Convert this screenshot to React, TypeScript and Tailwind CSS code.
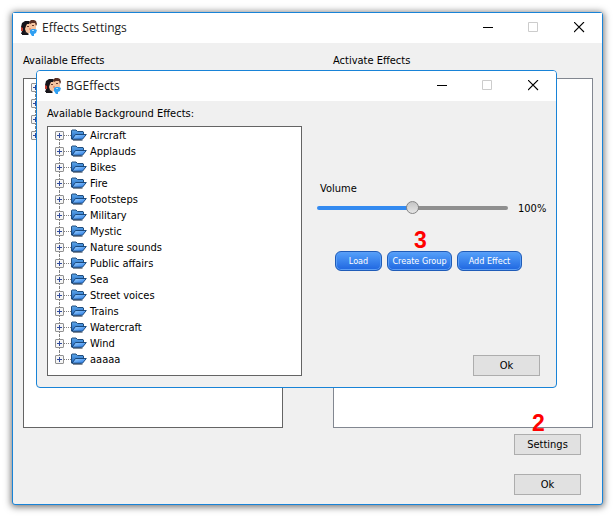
import type { ReactNode } from 'react';
import clsx from 'clsx';

const GROUPS = [
  'Aircraft',
  'Applauds',
  'Bikes',
  'Fire',
  'Footsteps',
  'Military',
  'Mystic',
  'Nature sounds',
  'Public affairs',
  'Sea',
  'Street voices',
  'Trains',
  'Watercraft',
  'Wind',
  'aaaaa',
];

function AppIcon() {
  return (
    <svg className="size-4 shrink-0" viewBox="0 0 16 16">
      <path d="M2 5L8 2L15 3L15 9L12 11L9 13H5L2 11Z" fill="#f6c4a0" />
      <path d="M0 7L1 3L4 1H8L9 2L8 4L6 4L5 6L4 9L5 12L2 14H0L1 11Z" fill="#15131a" />
      <path d="M8 2L10 0H13L15 1L16 4L15 6L14 3H11L9 4Z" fill="#5a3026" />
      <path d="M6 6.5H8M11 5.5H13" stroke="#6a3a2c" />
      <path d="M0 7L2 8V11H0Z" fill="#c03a30" />
      <path d="M8 8H10V10H8Z" fill="#ec9478" />
      <path d="M1 13L5 12L8 14L7 15H1Z" fill="#17151a" />
      <path d="M9 10L11 9H14L16 10L15 13L13 14V16H11L9 13Z" fill="#2f9ff2" />
      <path d="M11 10H13V11H11Z" fill="#a6deff" />
    </svg>
  );
}

function FolderIcon() {
  return (
    <svg className="h-3 w-4 shrink-0" viewBox="0 0 16 12">
      <defs>
        <linearGradient id="folder-front" x1="0" y1="0" x2="1" y2="1">
          <stop offset="0" stopColor="#a4d6ff" />
          <stop offset="1" stopColor="#1d74e6" />
        </linearGradient>
        <linearGradient id="folder-back" x1="0" y1="0" x2="0" y2="1">
          <stop offset="0" stopColor="#5fa9ea" />
          <stop offset="1" stopColor="#1c62c0" />
        </linearGradient>
      </defs>
      <path d="M.5 10V1.5L1 1H5L6.5 2.5H12L12.5 3V5L10 10Z" fill="url(#folder-back)" stroke="#123f70" strokeWidth=".9" />
      <path d="M1 10.2L4.5 5.5H15.3L11.5 10.2Z" fill="url(#folder-front)" stroke="#123f70" strokeWidth=".9" />
      <path d="M2 11.2H11.5" stroke="#1b2c44" strokeWidth=".8" />
    </svg>
  );
}

function WindowControls() {
  return (
    <div className="flex gap-[34px]">
      <button aria-label="Minimize" className="size-3">
        <svg className="size-3" viewBox="0 0 12 12">
          <path d="M1 5.5H11" stroke="#000" />
        </svg>
      </button>
      <button aria-label="Maximize" disabled className="size-3">
        <svg className="size-3" viewBox="0 0 12 12">
          <path d="M.5 .5H9.5V9.5H.5Z" fill="none" stroke="#ccc" />
        </svg>
      </button>
      <button aria-label="Close" className="size-3">
        <svg className="size-3" viewBox="0 0 12 12">
          <path d="M0 0L10 10M10 0L0 10" stroke="#000" strokeWidth="1.1" />
        </svg>
      </button>
    </div>
  );
}

function TitleBar({ title }: { title: string }) {
  return (
    <header className="flex h-[30px] items-center gap-[5px] bg-white pr-4 pl-2">
      <AppIcon />
      <h2 className="flex-1 font-['Open_Sans',sans-serif] text-[12px] leading-4 text-[#222]">{title}</h2>
      <WindowControls />
    </header>
  );
}

function TreeRow({ label, first, last }: { label?: string; first?: boolean; last?: boolean }) {
  return (
    <li className="relative flex h-4 items-center">
      <span
        className={clsx(
          'absolute left-1 border-l border-dotted border-[#808080]',
          first && 'top-2 h-2',
          last && 'top-0 h-2',
          !first && !last && 'top-0 h-4',
        )}
      />
      <button
        aria-label={label ? `Expand ${label}` : 'Expand'}
        className="relative size-[9px] shrink-0 rounded-[1px] border border-[#919191] bg-[#f5f5f5]"
      >
        <svg className="size-[7px]" viewBox="0 0 7 7">
          <path d="M1 3.5H6M3.5 1V6" stroke="#2f4a9c" />
        </svg>
      </button>
      <span className="w-[7px] border-t border-dotted border-[#808080]" />
      <FolderIcon />
      {label && <span className="mt-0.5 ml-[3px]">{label}</span>}
    </li>
  );
}

function Marker({ children, className }: { children: ReactNode; className: string }) {
  return (
    <span
      className={clsx(
        "pointer-events-none absolute bottom-full font-['Liberation_Sans',sans-serif] text-[23px] leading-[22px] font-bold text-[#f00]",
        className,
      )}
    >
      {children}
    </span>
  );
}

function DialogButton({ children }: { children: ReactNode }) {
  return (
    <button className="h-[21px] w-[67px] border border-[#adadad] bg-[#e1e1e1] leading-[19px]">
      {children}
    </button>
  );
}

function BlueButton({ children, className }: { children: ReactNode; className: string }) {
  return (
    <button
      className={clsx(
        'h-5 rounded-[6px] border border-[#1f5cb8] bg-linear-to-b from-[#55a0fa] to-[#1f66e0] text-[9px] leading-[18px] whitespace-nowrap text-white inset-ring inset-ring-[#5c9ef5]',
        className,
      )}
    >
      {children}
    </button>
  );
}

function BGEffectsDialog() {
  return (
    <section className="absolute top-[57px] right-[45px] left-[23px] overflow-hidden rounded-[4px] border border-[#1883d7] bg-[#f0f0f0]">
      <TitleBar title="BGEffects" />
      <div className="flex pb-[11px] pl-[10px]">
        <div className="w-[255px] shrink-0 pt-1">
          <h3 className="mb-[5px] h-4">Available Background Effects:</h3>
          <ul className="h-[250px] border border-[#646464] bg-white pl-[7px]">
            {GROUPS.map((name, i) => (
              <TreeRow key={name} label={name} first={i === 0} last={i === GROUPS.length - 1} />
            ))}
          </ul>
        </div>
        <div className="flex flex-1 flex-col pt-[79px] pl-[15px]">
          <label htmlFor="volume" className="ml-[3px] h-4">
            Volume
          </label>
          <div className="mt-1 flex h-4 items-center gap-[10px]">
            <input
              id="volume"
              type="range"
              min={0}
              max={200}
              defaultValue={100}
              className="h-4 w-[191px] shrink-0 appearance-none bg-transparent [&::-webkit-slider-runnable-track]:h-1 [&::-webkit-slider-runnable-track]:rounded-full [&::-webkit-slider-runnable-track]:bg-[linear-gradient(to_right,#338af0_50%,#8f8f8f_50%)] [&::-webkit-slider-thumb]:-mt-[5px] [&::-webkit-slider-thumb]:size-[13px] [&::-webkit-slider-thumb]:appearance-none [&::-webkit-slider-thumb]:rounded-full [&::-webkit-slider-thumb]:border [&::-webkit-slider-thumb]:border-[#858585] [&::-webkit-slider-thumb]:bg-linear-to-b [&::-webkit-slider-thumb]:from-[#c4c4c4] [&::-webkit-slider-thumb]:to-[#e6e6e6]"
            />
            <output htmlFor="volume" className="mt-0.5">
              100%
            </output>
          </div>
          <div className="mt-[35px] ml-[18px] flex gap-[5px]">
            <BlueButton className="w-[47px]">Load</BlueButton>
            <div className="relative flex">
              <BlueButton className="w-[65px]">Create Group</BlueButton>
              <Marker className="left-[27px]">3</Marker>
            </div>
            <BlueButton className="w-[65px]">Add Effect</BlueButton>
          </div>
          <div className="mt-auto flex justify-end pr-4">
            <DialogButton>Ok</DialogButton>
          </div>
        </div>
      </div>
    </section>
  );
}

export default function App() {
  return (
    <div className="bg-white py-3 pr-[13px] pl-3 font-['DejaVu_Sans_Condensed','Noto_Sans',sans-serif] text-[11px] leading-[18px] text-black">
      <main className="relative rounded-[3px] border border-[#1883d7] bg-[#f0f0f0] shadow-[0_1px_7px_1px_rgba(0,0,0,0.55)]">
        <TitleBar title="Effects Settings" />
        <div className="flex gap-[50px] pt-[9px] pr-[9px] pl-[10px]">
          <div className="flex-1">
            <h3 className="mb-[10px] h-4">Available Effects</h3>
            <ul className="h-[350px] border border-[#646464] bg-white pl-[7px]">
              <TreeRow first />
              <TreeRow />
              <TreeRow />
              <TreeRow last />
            </ul>
          </div>
          <div className="flex-1">
            <h3 className="mb-[10px] h-4">Activate Effects</h3>
            <div className="h-[350px] border border-[#828790] bg-white" />
          </div>
        </div>
        <div className="flex flex-col items-end gap-[19px] pt-[6px] pr-[21px] pb-[9px]">
          <div className="relative flex">
            <DialogButton>Settings</DialogButton>
            <Marker className="left-[18px]">2</Marker>
          </div>
          <DialogButton>Ok</DialogButton>
        </div>
        <BGEffectsDialog />
      </main>
    </div>
  );
}
